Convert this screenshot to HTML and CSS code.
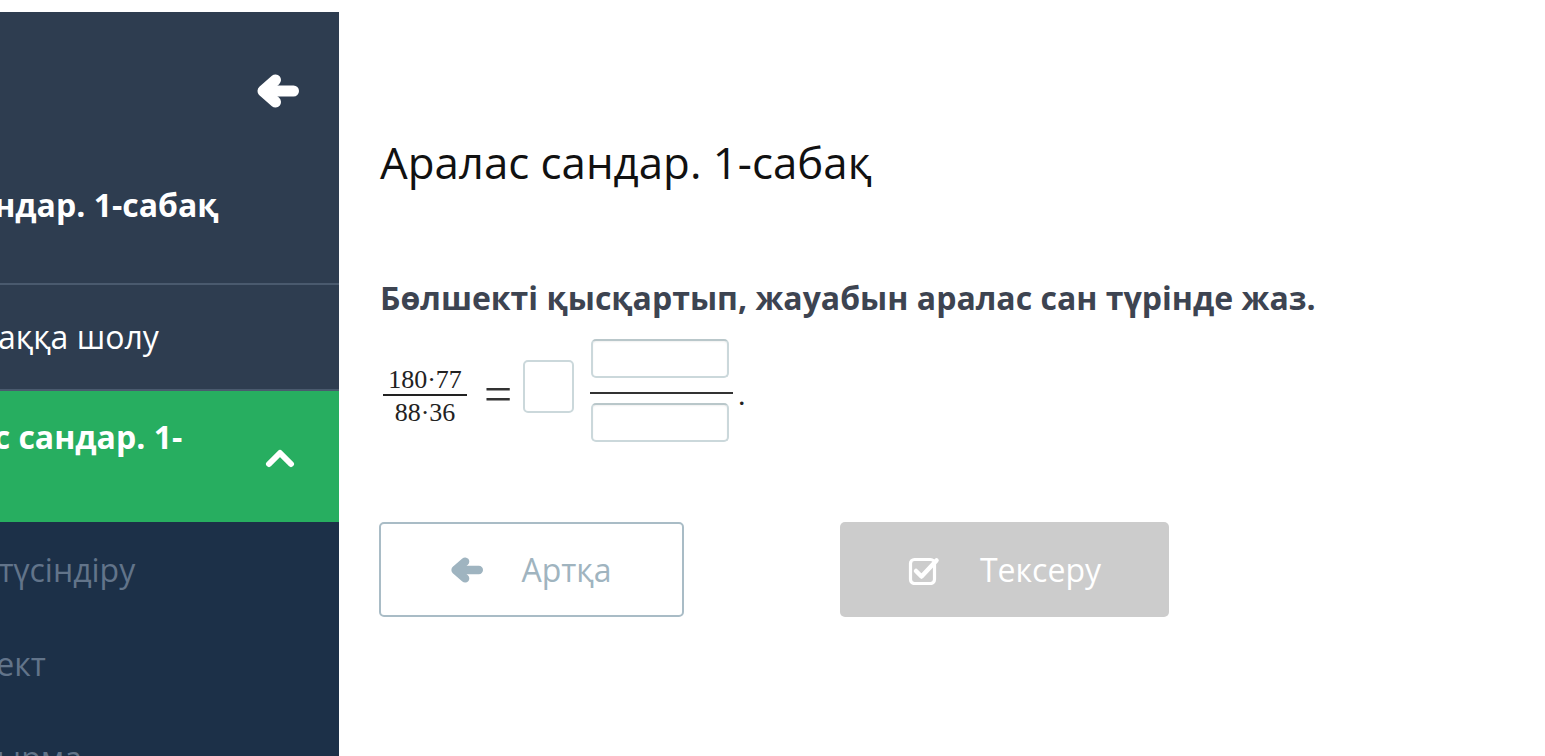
FILE: index.html
```html
<!DOCTYPE html>
<html lang="kk">
<head>
<meta charset="utf-8">
<title>Аралас сандар. 1-сабақ</title>
<link rel="stylesheet" href="styles.css">
</head>
<body>
<div class="page">
  <aside class="sidebar">
    <div class="sb-inner">
      <div class="sb-head">
        <div class="sb-back">
          <svg class="ico-back" viewBox="0 0 42 34" width="42" height="34"><g fill="none" stroke="#fff" stroke-width="11" stroke-linecap="round" stroke-linejoin="round"><polyline points="18.5,6 6,17 18.5,28"/><line x1="7" y1="17" x2="36.5" y2="17"/></g></svg>
        </div>
        <div class="sb-title">Аралас сандар. 1-сабақ</div>
      </div>
      <div class="sb-item">Сабаққа шолу</div>
      <div class="sb-item sb-active">
        <span class="sb-active-text">Аралас сандар. 1-сабақ</span>
        <svg class="ico-up" viewBox="0 0 30 20" width="30" height="20"><polyline points="4,16 15,5 26,16" fill="none" stroke="#fff" stroke-width="6" stroke-linecap="round" stroke-linejoin="round"/></svg>
      </div>
      <div class="sb-sub">
        <div class="sb-subitem">Бейне түсіндіру</div>
        <div class="sb-subitem sb-subitem-2">Конспект</div>
        <div class="sb-subitem sb-subitem-3">Тапсырма</div>
      </div>
    </div>
  </aside>
  <main class="content">
    <h1 class="title">Аралас сандар. 1-сабақ</h1>
    <p class="question">Бөлшекті қысқартып, жауабын аралас сан түрінде жаз.</p>
    <div class="math">
      <span class="frac">
        <span class="num">180·77</span>
        <span class="bar"></span>
        <span class="den">88·36</span>
      </span>
      <span class="eq">=</span>
      <span class="box-whole"></span>
      <span class="bigfrac">
        <span class="inp"></span>
        <span class="bigbar"></span>
        <span class="inp"></span>
      </span>
      <span class="dot">.</span>
    </div>
    <div class="actions">
      <button class="btn btn-back">
        <svg viewBox="0 0 42 34" width="32" height="26"><g fill="none" stroke="#9fb4c0" stroke-width="11" stroke-linecap="round" stroke-linejoin="round"><polyline points="18.5,6 6,17 18.5,28"/><line x1="7" y1="17" x2="36.5" y2="17"/></g></svg>
        <span>Артқа</span>
      </button>
      <button class="btn btn-check">
        <svg viewBox="0 0 32 30" width="32" height="30"><rect x="2.5" y="4.5" width="24" height="24" rx="4" fill="none" stroke="#fff" stroke-width="3.2"/><polyline points="8,16 13.5,21.5 28.5,5.5" fill="none" stroke="#fff" stroke-width="4.5" stroke-linecap="round" stroke-linejoin="round"/></svg>
        <span>Тексеру</span>
      </button>
    </div>
  </main>
</div>
</body>
</html>
```

FILE: styles.css
```css
html, body {
  margin: 0;
  padding: 0;
  background: #fff;
}
body {
  font-family: "Open Sans", "Noto Sans", sans-serif;
  overflow: hidden;
}
.page {
  display: flex;
  height: 756px;
}
.sidebar {
  width: 339px;
  flex: 0 0 339px;
  margin-top: 12px;
  background: #1c3048;
  overflow: hidden;
}
.sb-inner {
  margin-left: -220px;
  width: 559px;
}
.sb-head {
  background: #2e3d50;
  padding: 62px 0 0 52px;
  height: 209px;
  border-bottom: 2px solid #4a5a6e;
}
.sb-back {
  display: flex;
  justify-content: flex-end;
  padding-right: 40px;
  height: 34px;
}
.ico-back {
  display: block;
}
.sb-title {
  margin-top: 77px;
  font-size: 32px;
  line-height: 40px;
  font-weight: 700;
  color: #fff;
  white-space: nowrap;
}
.sb-item {
  background: #2e3d50;
  height: 104px;
  line-height: 104px;
  padding-left: 161px;
  font-size: 32px;
  color: #fff;
  border-bottom: 2px solid #4a5a6e;
  white-space: nowrap;
}
.sb-active {
  background: #27ae60;
  border-bottom: none;
  height: 131px;
  line-height: 40px;
  display: flex;
  align-items: center;
  padding-left: 112px;
  padding-right: 44px;
  white-space: normal;
}
.sb-active-text {
  flex: 1;
  font-weight: 700;
  margin-right: 26px;
}
.ico-up {
  flex: none;
  margin-top: 2px;
}
.sb-sub {
  padding-top: 1px;
}
.sb-subitem {
  height: 94px;
  line-height: 94px;
  padding-left: 114px;
  font-size: 32px;
  color: #62748a;
  white-space: nowrap;
}
.sb-subitem-2 {
  padding-left: 122px;
}
.sb-subitem-3 {
  padding-left: 146px;
}
.content {
  padding-left: 41px;
  flex: 1;
}
.title {
  margin: 136px 0 0;
  font-size: 43.8px;
  line-height: 53px;
  font-weight: 400;
  color: #111;
}
.question {
  margin: 89px 0 0;
  font-size: 32px;
  line-height: 40px;
  font-weight: 700;
  color: #3d4451;
}
.math {
  margin-top: 21px;
  display: flex;
  align-items: flex-start;
  height: 103px;
  font-family: "Liberation Serif", "DejaVu Serif", serif;
  color: #222;
}
.frac {
  display: flex;
  flex-direction: column;
  align-items: center;
  width: 84px;
  margin-left: 3px;
  margin-top: 28px;
}
.num, .den {
  font-size: 26px;
  line-height: 26px;
  white-space: nowrap;
}
.bar {
  display: block;
  width: 84px;
  height: 1.5px;
  background: #222;
  margin: 1px 0 4px;
}
.eq {
  width: 28px;
  text-align: center;
  font-size: 50px;
  line-height: 48px;
  margin: 31px 0 0 17px;
  color: #333;
}
.box-whole {
  width: 47px;
  height: 49px;
  border: 2px solid #cbd8db;
  border-radius: 5px;
  margin: 21px 0 0 11px;
}
.bigfrac {
  display: flex;
  flex-direction: column;
  align-items: flex-start;
  margin-left: 16px;
}
.inp {
  display: block;
  width: 134px;
  height: 35px;
  margin-left: 1px;
  border: 2px solid #cbd8db;
  border-top-color: #b9c7ca;
  border-radius: 5px;
  box-shadow: inset 0 1px 2px rgba(0,0,0,0.06);
}
.bigbar {
  display: block;
  width: 143px;
  height: 2px;
  background: #333;
  margin: 14px 0 9px;
}
.dot {
  font-size: 30px;
  line-height: 30px;
  margin: 41px 0 0 5px;
}
.actions {
  margin-top: 80px;
  display: flex;
  gap: 156px;
}
.btn {
  height: 95px;
  border-radius: 5px;
  display: flex;
  align-items: center;
  justify-content: center;
  gap: 38px;
  font-family: "Open Sans", sans-serif;
  font-size: 32px;
  padding: 0;
  cursor: pointer;
}
.btn svg {
  display: block;
}
.btn-back {
  width: 305px;
  background: #fff;
  border: 2px solid #a9bcc6;
  color: #a0b4bf;
  margin-left: -1px;
}
.btn-check {
  width: 329px;
  background: #cccccc;
  border: none;
  color: #fff;
  gap: 40px;
}
```
